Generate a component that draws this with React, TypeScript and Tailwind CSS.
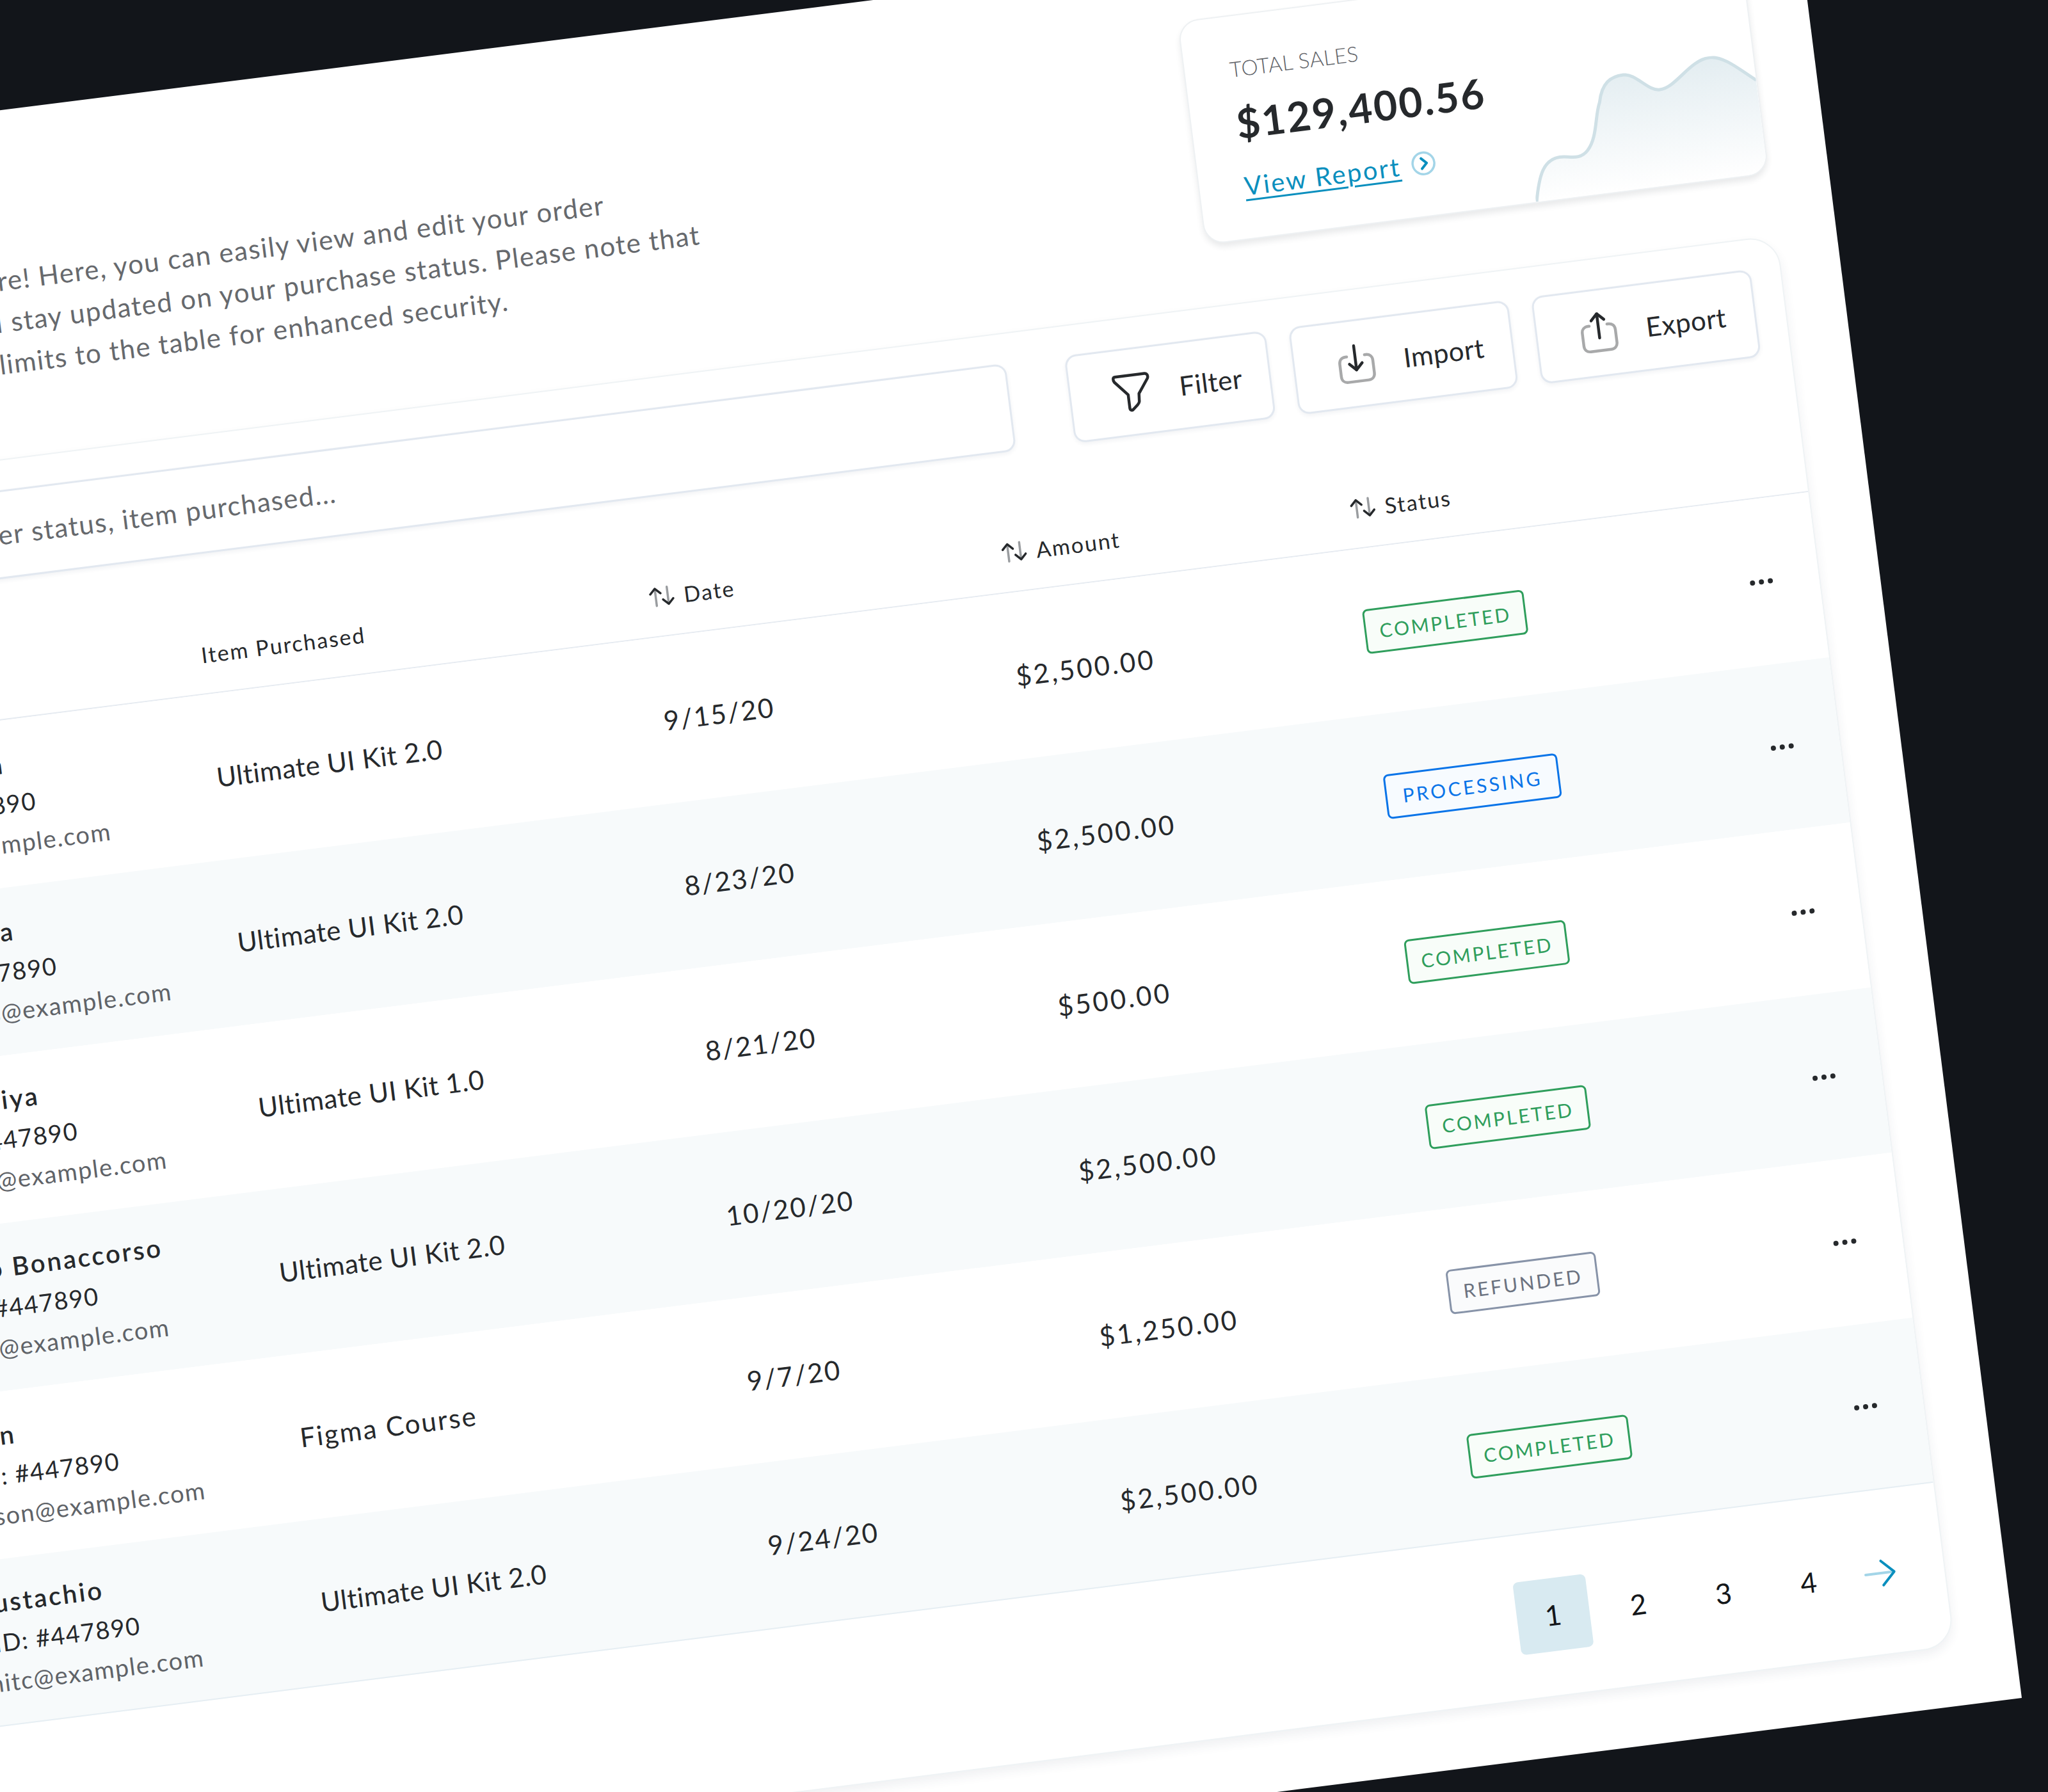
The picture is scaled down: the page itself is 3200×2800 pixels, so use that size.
import React from 'react';

const orders = [
  { name: 'Martin Hanson', email: 'jhanson12@example.com', item: 'Ultimate UI Kit 2.0', itemClass: 'tracking-[0.6px]', date: '9/15/20', amount: '$2,500.00', status: 'COMPLETED' },
  { name: 'Alena Ivanova', email: 'alena.williams@example.com', item: 'Ultimate UI Kit 2.0', itemClass: 'tracking-[0.6px]', date: '8/23/20', amount: '$2,500.00', status: 'PROCESSING' },
  { name: 'Karina Anisiya', email: 'katy.anisiya@example.com', item: 'Ultimate UI Kit 1.0', itemClass: 'tracking-[0.6px]', date: '8/21/20', amount: '$500.00', status: 'COMPLETED' },
  { name: 'Francesco Bonaccorso', email: 'fbonaccor@example.com', item: 'Ultimate UI Kit 2.0', itemClass: 'tracking-[0.6px]', date: '10/20/20', amount: '$2,500.00', status: 'COMPLETED' },
  { name: 'Lily Chen', email: 'lily.johnson@example.com', item: 'Figma Course', itemClass: 'tracking-[2.2px]', date: '9/7/20', amount: '$1,250.00', status: 'REFUNDED' },
  { name: 'Tom Eustachio', email: 'tomymitc@example.com', item: 'Ultimate UI Kit 2.0', itemClass: 'tracking-[0.6px]', date: '9/24/20', amount: '$2,500.00', status: 'COMPLETED' },
];

function SortIcon() {
  return (
    <svg width="44" height="40" viewBox="0 0 44 40" fill="none" strokeWidth="3.5" strokeLinecap="round" strokeLinejoin="round">
      <path d="M12 34V8" stroke="#9a9da0" />
      <path d="M4 15l8-8 8 8" stroke="#26292c" />
      <path d="M31 6v26" stroke="#9a9da0" />
      <path d="M23 25l8 8 8-8" stroke="#26292c" />
    </svg>
  );
}

function FilterIcon() {
  return (
    <svg width="64" height="64" viewBox="0 0 64 64" fill="none" stroke="#26292c" strokeWidth="4.5" strokeLinejoin="round">
      <path d="M8 6H54c4 0 6 4 4 8L42 36l-1 12c0 2-1 3-3 5l-7 6c-3 3-6 1-6-2V36L6 14C4 10 4 6 8 6z" />
    </svg>
  );
}

function ImportIcon() {
  return (
    <svg width="64" height="64" viewBox="0 0 64 64" fill="none" strokeWidth="4.5" strokeLinecap="round" strokeLinejoin="round">
      <path d="M18 20h-2c-6 0-10 4-10 10v20c0 6 4 10 10 10h32c6 0 10-4 10-10V30c0-6-4-10-10-10h-2" stroke="#a8a9aa" />
      <path d="M31 4v38" stroke="#26292c" />
      <path d="M21 32l10 10 10-10" stroke="#26292c" />
    </svg>
  );
}

function ExportIcon() {
  return (
    <svg width="64" height="64" viewBox="0 0 64 64" fill="none" strokeWidth="4.5" strokeLinecap="round" strokeLinejoin="round">
      <path d="M18 20h-2c-6 0-10 4-10 10v20c0 6 4 10 10 10h32c6 0 10-4 10-10V30c0-6-4-10-10-10h-2" stroke="#a8a9aa" />
      <path d="M32 40V2" stroke="#26292c" />
      <path d="M22 12L32 2l10 10" stroke="#26292c" />
    </svg>
  );
}

function ToolButton({ icon, label, width }: { icon: React.ReactNode; label: string; width: string }) {
  return (
    <button className={`${width} h-[138px] flex items-center gap-[42px] pl-[64px] rounded-[18px] border-[3px] border-[#e2e8f0] bg-white shadow-[0_3px_6px_rgba(30,50,80,0.06)] text-[42px] tracking-[0.5px] text-[#26292c]`}>
      {icon}
      <span>{label}</span>
    </button>
  );
}

function Badge({ status }: { status: string }) {
  if (status === 'PROCESSING') {
    return <span className="h-[70px] w-[274px] flex items-center justify-center rounded-[8px] border-[3px] border-[#0a74e8] bg-[#f7fbff] text-[30px] tracking-[3.6px] text-[#0a74e8]">PROCESSING</span>;
  }
  if (status === 'REFUNDED') {
    return <span className="h-[70px] w-[236px] flex items-center justify-center rounded-[8px] border-[3px] border-[#8793a8] bg-[#fafbfc] text-[30px] tracking-[3.3px] text-[#6b7280]">REFUNDED</span>;
  }
  return <span className="h-[70px] w-[254px] flex items-center justify-center rounded-[8px] border-[3px] border-[#2f9e5c] bg-[#f8fdf9] text-[30px] tracking-[3px] text-[#2f9e5c]">COMPLETED</span>;
}

function Dots() {
  return (
    <div className="flex gap-[6px]">
      <span className="size-[8px] rounded-full bg-[#26292c]" />
      <span className="size-[8px] rounded-full bg-[#26292c]" />
      <span className="size-[8px] rounded-full bg-[#26292c]" />
    </div>
  );
}

function SalesCard() {
  return (
    <div className="relative w-[888px] h-[352px] shrink-0 overflow-hidden rounded-[32px] border-2 border-[#eef1f3] bg-white pl-[70px] pt-[60px] shadow-[0_6px_10px_rgba(40,50,60,0.10)]">
      <svg className="absolute right-0 bottom-0" width="365" height="192" viewBox="0 0 365 192" fill="none">
        <defs>
          <linearGradient id="salesFill" x1="0" y1="0" x2="0" y2="1">
            <stop offset="0" stopColor="#e3edf1" />
            <stop offset="1" stopColor="#ffffff" />
          </linearGradient>
        </defs>
        <path d="M1 192C10 150 20 128 45 127C60 126 75 137 90 122C108 104 108 70 118 50C125 20 140 12 160 12C180 12 195 42 214 42C240 42 265 2 298 2C320 2 345 30 365 46V192Z" fill="url(#salesFill)" />
        <path d="M1 192C10 150 20 128 45 127C60 126 75 137 90 122C108 104 108 70 118 50C125 20 140 12 160 12C180 12 195 42 214 42C240 42 265 2 298 2C320 2 345 30 365 46" stroke="#cfe0e6" strokeWidth="5" />
      </svg>
      <div className="relative text-[33px] font-light leading-[44px] tracking-[0.4px] text-[#5f6368]">TOTAL SALES</div>
      <div className="relative mt-[26px] text-[64px] font-bold leading-[76px] tracking-[2.5px] text-[#26292c]">$129,400.56</div>
      <div className="relative mt-[34px] flex items-center gap-[16px]">
        <span className="text-[40px] leading-[52px] tracking-[2.6px] text-[#0a8fbe] underline underline-offset-[6px] decoration-[3px]">View Report</span>
        <svg width="40" height="40" viewBox="0 0 40 40" fill="none" strokeLinecap="round" strokeLinejoin="round">
          <circle cx="20" cy="20" r="17" stroke="#a3d5e8" strokeWidth="3.5" />
          <path d="M17 12l8 8-8 8" stroke="#0a8fbe" strokeWidth="4" />
        </svg>
      </div>
    </div>
  );
}

export default function App() {
  return (
    <div className="relative w-[3200px] h-[2800px] overflow-hidden bg-[#12151a] font-['Lato',sans-serif]">
      <div className="absolute left-[-341px] top-[-204px] w-[3500px] h-[2857px] origin-bottom-right rotate-[-7.2deg] bg-white pt-[93px] pr-[93px]">
        <div className="flex justify-end">
          <div className="flex-1 pl-[250px] pt-[139px] text-[42px] leading-[65px] tracking-[1.5px] text-[#66696d] whitespace-nowrap">
            <div>Welcome to the store! Here, you can easily view and edit your order</div>
            <div>details, and you will stay updated on your purchase status. Please note that</div>
            <div>we've added some limits to the table for enhanced security.</div>
          </div>
          <SalesCard />
        </div>

        <div className="ml-[80px] mt-[96px] h-[2223px] overflow-hidden rounded-[48px] border-2 border-[#eff3f5] bg-white shadow-[0_8px_16px_rgba(40,60,80,0.07)]">
          <div className="flex items-center gap-[36px] pl-[60px] pr-[46px] pt-[46px] pb-[95px]">
            <div className="flex-1 mr-[56px] h-[138px] flex items-center justify-end rounded-[18px] border-[3px] border-[#e2e8f0] bg-white pr-[1060px] shadow-[0_3px_6px_rgba(30,50,80,0.06)] text-[42px] tracking-[1.5px] text-[#66696d] whitespace-nowrap">
              Search by name, order status, item purchased...
            </div>
            <ToolButton icon={<FilterIcon />} label="Filter" width="w-[317px]" />
            <ToolButton icon={<ImportIcon />} label="Import" width="w-[346px]" />
            <ToolButton icon={<ExportIcon />} label="Export" width="w-[346px]" />
          </div>

          <div className="grid h-[124px] grid-cols-[800px_704px_555px_549px_715px] items-center border-b-2 border-[#e6ebf1] text-[34px] tracking-[2px] text-[#26292c]">
            <div className="pl-[170px]">Customer</div>
            <div>Item Purchased</div>
            <div className="flex items-center gap-[12px]"><SortIcon />Date</div>
            <div className="flex items-center gap-[12px]"><SortIcon />Amount</div>
            <div className="flex items-center gap-[12px]"><SortIcon />Status</div>
          </div>

          {orders.map((order, index) => (
            <div
              key={index}
              className={`grid h-[260px] grid-cols-[800px_704px_555px_549px_715px] items-center text-[42px] text-[#26292c] ${index % 2 === 1 ? 'bg-[#f7fafb]' : 'bg-white'} ${index === 5 ? 'border-b-2 border-[#e6eef3]' : ''}`}
            >
              <div className="pl-[170px]">
                <div className="text-[40px] font-semibold leading-[62px] tracking-[3px] whitespace-nowrap">{order.name}</div>
                <div className="text-[38px] leading-[62px] tracking-[1.5px]">Order ID: #447890</div>
                <div className="text-[38px] leading-[62px] tracking-[1.5px] text-[#5f6368]">{order.email}</div>
              </div>
              <div className={order.itemClass}>{order.item}</div>
              <div className="tracking-[2.1px]">{order.date}</div>
              <div className="tracking-[3.2px]">{order.amount}</div>
              <div className="flex items-center justify-between pr-[72px]">
                <Badge status={order.status} />
                <Dots />
              </div>
            </div>
          ))}

          <div className="flex h-[259px] items-center justify-end gap-[20px] pr-[75px] text-[44px] text-[#14171a]">
            <span className="flex size-[114px] items-center justify-center rounded-[8px] bg-[#d8eaf1]">1</span>
            <span className="flex size-[114px] items-center justify-center">2</span>
            <span className="flex size-[114px] items-center justify-center">3</span>
            <span className="flex size-[114px] items-center justify-center">4</span>
            <svg className="ml-[11px]" width="50" height="44" viewBox="0 0 50 44" fill="none" strokeWidth="4" strokeLinecap="round" strokeLinejoin="round">
              <path d="M2 22h44" stroke="#a3d5e8" />
              <path d="M28 3l19 19-19 19" stroke="#0a8fbe" />
            </svg>
          </div>
        </div>
      </div>
    </div>
  );
}
